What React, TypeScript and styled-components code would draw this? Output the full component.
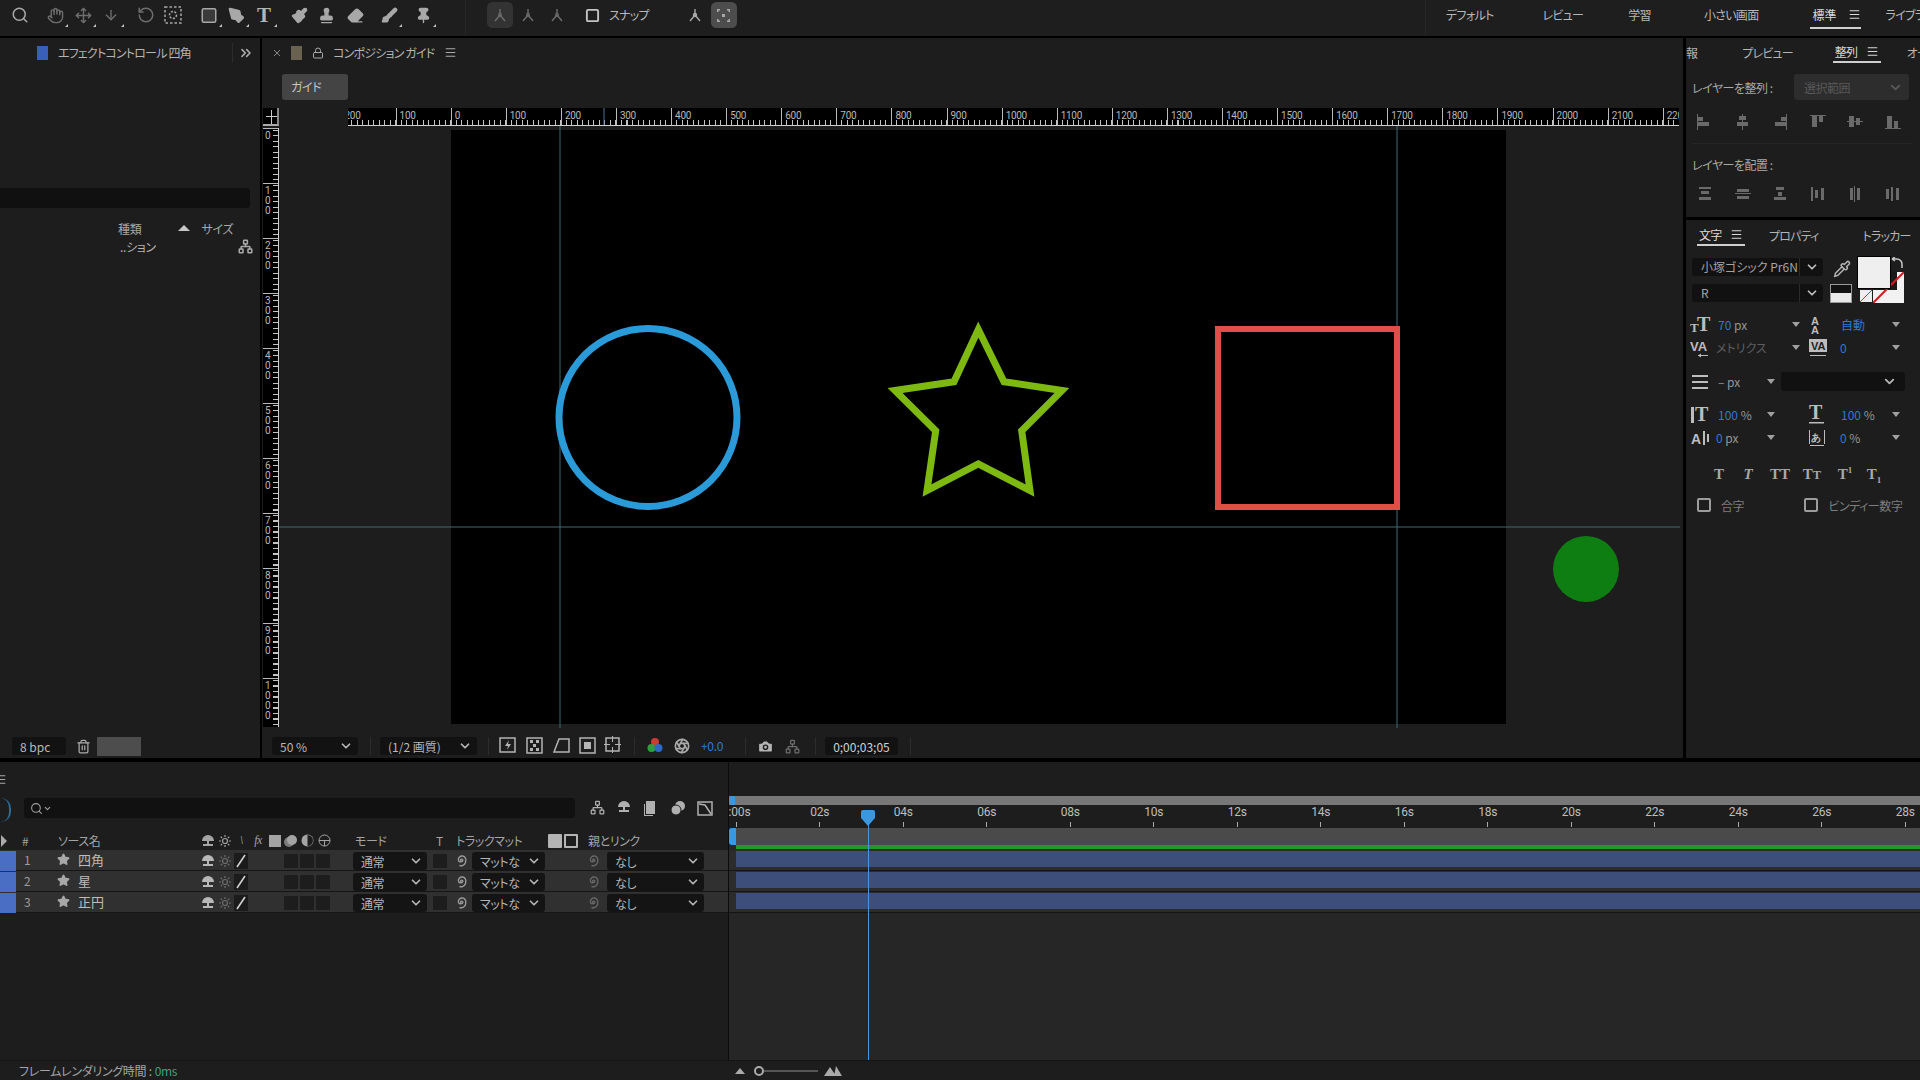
import React from "react";
import styled, { createGlobalStyle } from "styled-components";
import {
  Search,
  Hand,
  Move,
  ArrowDown,
  RotateCcw,
  Square,
  PenTool,
  Paintbrush,
  Stamp,
  Eraser,
  Brush,
  Pin,
  ChevronDown,
  ChevronsRight,
  Lock,
  Menu,
  Trash2,
  Camera,
  Star,
  Pipette,
  Aperture,
  Network,
} from "lucide-react";

const Global = createGlobalStyle`
  html, body {
    margin: 0;
    width: 1920px;
    height: 1080px;
    overflow: hidden;
    background: #000;
  }
  * { box-sizing: border-box; }
  body {
    font-family: "Noto Sans CJK JP", "Roboto", sans-serif;
    font-feature-settings: "palt";
    color: #b4b4b4;
  }
`;

const panel = "#1d1d1d";

const Shell = styled.div`
  width: 1920px;
  height: 1080px;
  display: flex;
  flex-direction: column;
  background: #000;
`;

/* top toolbar */
const Toolbar = styled.div`
  height: 36px;
  padding-bottom: 6px;
  background: #1e1e1e;
  display: flex;
  align-items: center;
  flex: none;
`;

const ToolCell = styled.div<{ $gap: number; $box?: string; $dim?: boolean; $corner?: boolean }>`
  position: relative;
  flex: none;
  width: 18px;
  height: 18px;
  margin-left: ${(p) => p.$gap}px;
  color: ${(p) => (p.$dim ? "#6e6e6e" : "#a8a8a8")};
  display: flex;
  align-items: center;
  justify-content: center;
  ${(p) => p.$box && `background: ${p.$box}; box-shadow: 0 0 0 4px ${p.$box}; border-radius: 2px;`}
  ${(p) =>
    p.$corner &&
    `&::after {
      content: "";
      position: absolute;
      right: -4px;
      bottom: -3px;
      border-left: 3px solid transparent;
      border-bottom: 3px solid #c4c4c4;
    }`}
`;

const SerifTool = styled(ToolCell)`
  font-family: "Liberation Serif", serif;
  font-weight: 700;
  font-size: 21px;
  color: #b4b4b4;
`;

const ToolSep = styled.div<{ $gap: number }>`
  width: 1px;
  height: 36px;
  align-self: flex-start;
  background: #262626;
  flex: none;
  margin-left: ${(p) => p.$gap}px;
`;

const TopText = styled.span<{ $gap: number }>`
  flex: none;
  font-size: 12px;
  letter-spacing: -0.7px;
  line-height: 26px;
  margin-left: ${(p) => p.$gap}px;
  color: #b8b8b8;
  white-space: nowrap;
`;

const ExposureText = styled(TopText)`
  color: #2f79d6;
  letter-spacing: -0.3px;
`;

const ActiveWorkspace = styled.div<{ $gap: number }>`
  flex: none;
  width: 51px;
  height: 28px;
  margin-left: ${(p) => p.$gap}px;
  padding-left: 2px;
  border-bottom: 2px solid #d0d0d0;
  display: flex;
  align-items: center;
  justify-content: space-between;
  font-size: 12px;
  color: #dcdcdc;
`;

/* main area */
const Main = styled.div`
  flex: none;
  height: 720px;
  margin-top: 2px;
  display: flex;
`;

const LeftPanel = styled.section`
  width: 260px;
  flex: none;
  background: ${panel};
  display: flex;
  flex-direction: column;
  margin-right: 2px;
`;

const TabRow = styled.div<{ $h?: number }>`
  height: ${(p) => p.$h ?? 34}px;
  padding-bottom: 5px;
  flex: none;
  display: flex;
  align-items: center;
  overflow: hidden;
  font-size: 12px;
  letter-spacing: -0.8px;
  color: #bcbcbc;
`;

const Footage = styled.span<{ $gap: number; $c: string }>`
  flex: none;
  width: 11px;
  height: 14px;
  margin-left: ${(p) => p.$gap}px;
  background: ${(p) => p.$c};
`;

const Tab = styled.span<{ $gap: number }>`
  flex: none;
  margin-left: ${(p) => p.$gap}px;
  white-space: nowrap;
  color: #b4b4b4;
`;

const ActiveTab = styled.div<{ $gap: number; $w: number }>`
  flex: none;
  width: ${(p) => p.$w}px;
  margin-left: ${(p) => p.$gap}px;
  padding: 0 2px;
  height: 20px;
  display: flex;
  align-items: center;
  justify-content: space-between;
  border-bottom: 2px solid #cfcfcf;
  color: #dadada;
`;

const TabIcon = styled.span<{ $gap: number }>`
  flex: none;
  display: flex;
  align-items: center;
  margin-left: ${(p) => p.$gap}px;
  color: #aaa;
`;

const VLine = styled.div<{ $gap: number; $h?: number }>`
  flex: none;
  width: 1px;
  height: ${(p) => p.$h ?? 20}px;
  background: #2c2c2c;
  margin-left: ${(p) => p.$gap}px;
`;

const ProjectSearch = styled.div`
  width: 250px;
  height: 20px;
  margin-top: 116px;
  background: #101010;
  border-radius: 0 3px 3px 0;
  flex: none;
`;

const ProjectHead = styled.div`
  height: 18px;
  margin-top: 11px;
  padding-left: 118px;
  display: flex;
  align-items: center;
  font-size: 12px;
  letter-spacing: -0.3px;
  color: #a8a8a8;
  flex: none;
`;

const SortArrow = styled.span`
  width: 0;
  height: 0;
  margin-left: 37px;
  margin-right: 11px;
  border-left: 6px solid transparent;
  border-right: 6px solid transparent;
  border-bottom: 6px solid #c8c8c8;
`;

const ProjectRow = styled.div`
  height: 20px;
  margin-top: -1px;
  padding-left: 120px;
  display: flex;
  align-items: center;
  font-size: 12px;
  letter-spacing: -0.3px;
  color: #b4b4b4;
  flex: none;
`;

const Spacer = styled.div`
  flex: 1;
`;

const BottomBar = styled.div`
  height: 24px;
  flex: none;
  display: flex;
  align-items: center;
  font-size: 12px;
`;

const DarkBox = styled.div<{ $gap: number; $w: number; $color?: string }>`
  flex: none;
  width: ${(p) => p.$w}px;
  height: 18px;
  margin-left: ${(p) => p.$gap}px;
  padding: 0 5px 0 8px;
  background: #121212;
  border-radius: 3px;
  display: flex;
  align-items: center;
  justify-content: space-between;
  font-size: 12px;
  white-space: nowrap;
  color: ${(p) => p.$color ?? "#b8b8b8"};
`;

const GrayPatch = styled.div`
  width: 44px;
  height: 19px;
  margin-left: 6px;
  background: #4d4d4d;
`;

/* composition panel */
const CompPanel = styled.section`
  width: 1421px;
  flex: none;
  background: ${panel};
  display: flex;
  flex-direction: column;
  margin-right: 3px;
`;

const GuideBar = styled.div`
  height: 36px;
  flex: none;
  padding: 2px 0 0 20px;
`;

const GuideButton = styled.div`
  width: 66px;
  height: 26px;
  border-radius: 3px;
  background: #444;
  color: #c6c6c6;
  font-size: 12px;
  letter-spacing: -0.5px;
  line-height: 26px;
  padding-left: 9px;
`;

const Viewer = styled.div`
  position: relative;
  flex: 1;
  display: flex;
  flex-direction: column;
  overflow: hidden;
`;

const RulerRow = styled.div`
  height: 18px;
  flex: none;
  display: flex;
`;

const RulerCorner = styled.div`
  flex: none;
  width: 16px;
  margin-left: 1px;
  background: #000;
  border-bottom: 2px solid #aaa;
  border-right: 2px solid #888;
  position: relative;
  &::before {
    content: "";
    position: absolute;
    left: 3px;
    right: 0;
    top: 8px;
    height: 1px;
    background: #ccc;
  }
  &::after {
    content: "";
    position: absolute;
    left: 8px;
    top: 2px;
    bottom: 0;
    width: 1px;
    background: #ccc;
  }
`;

const HRuler = styled.div`
  flex: 1;
  margin-left: 69px;
  margin-right: 4px;
  display: flex;
  overflow: hidden;
  background-color: #000;
  background-image: repeating-linear-gradient(
    to right,
    #c4c4c4 0,
    #c4c4c4 1px,
    transparent 1px,
    transparent 5.51px
  );
  background-size: 100% 5px;
  background-position: 3px 100%;
  background-repeat: no-repeat;
  border-bottom: 1px solid #d0d0d0;
`;

const HMajor = styled.div<{ $first?: boolean }>`
  flex: none;
  width: 55.1px;
  height: 18px;
  margin-left: ${(p) => (p.$first ? "-7.5px" : "0")};
  border-left: 1px solid #bbb;
  padding: 1px 0 0 3px;
  font-family: "Roboto", sans-serif;
  font-size: 10px;
  line-height: 14px;
  letter-spacing: -0.3px;
  color: #b8b8b8;
`;

const ViewerBody = styled.div`
  flex: 1;
  display: flex;
  min-height: 0;
`;

const VRuler = styled.div`
  flex: none;
  width: 16px;
  height: 599px;
  margin-left: 1px;
  margin-top: 2px;
  display: flex;
  flex-direction: column;
  overflow: hidden;
  background-color: #000;
  background-image: repeating-linear-gradient(
    to bottom,
    #c4c4c4 0,
    #c4c4c4 1px,
    transparent 1px,
    transparent 5.5px
  );
  background-size: 5px 100%;
  background-position: 100% 2px;
  background-repeat: no-repeat;
  border-right: 1px solid #d0d0d0;
`;

const VMajor = styled.div`
  flex: none;
  height: 55px;
  border-top: 1px solid #bbb;
  padding: 2px 0 0 2px;
  display: flex;
  flex-direction: column;
  font-family: "Roboto", sans-serif;
  font-size: 10px;
  line-height: 10px;
  color: #b8b8b8;
`;

const Canvas = styled.div`
  flex: none;
  width: 1055px;
  height: 594px;
  margin-left: 172px;
  margin-top: 4px;
  background: #000;
`;

const Overlay = styled.svg`
  position: absolute;
  left: 0;
  top: 0;
  pointer-events: none;
`;

/* right column */
const RightColumn = styled.aside`
  width: 234px;
  flex: none;
  display: flex;
  flex-direction: column;
  gap: 3px;
`;

const AlignPanel = styled.section`
  height: 179px;
  flex: none;
  background: ${panel};
  overflow: hidden;
`;

const LabelRow = styled.div<{ $top: number }>`
  height: 26px;
  margin-top: ${(p) => p.$top}px;
  padding: 0 11px 0 6px;
  display: flex;
  align-items: center;
  justify-content: space-between;
  font-size: 12px;
  letter-spacing: -0.5px;
  color: #a8a8a8;
`;

const DimSelect = styled.div`
  flex: none;
  width: 115px;
  height: 26px;
  padding: 0 6px 0 10px;
  background: #2d2d2d;
  border-radius: 3px;
  color: #585858;
  display: flex;
  align-items: center;
  justify-content: space-between;
`;

const AlignRow = styled.div<{ $top: number }>`
  margin-top: ${(p) => p.$top}px;
  height: 18px;
  padding-left: 10px;
  display: flex;
  gap: 19.6px;
  color: #6a6a6a;
`;

const Divider = styled.div<{ $top: number }>`
  height: 1px;
  margin: ${(p) => p.$top}px 8px 0 6px;
  background: #262626;
`;

const CharPanel = styled.section`
  flex: 1;
  background: ${panel};
  overflow: hidden;
`;

const FontArea = styled.div`
  position: relative;
  height: 46px;
  margin-top: 2px;
  display: flex;
`;

const FontColumn = styled.div`
  width: 131px;
  margin-left: 6px;
  display: flex;
  flex-direction: column;
  gap: 8px;
`;

const FontSelect = styled.div`
  height: 18px;
  display: flex;
  background: #111;
  border-radius: 3px;
  font-size: 12px;
  color: #a4a4a4;
`;

const FontName = styled.div`
  width: 108px;
  padding-left: 9px;
  line-height: 18px;
  white-space: nowrap;
  overflow: hidden;
  border-right: 1px solid #2b2b2b;
`;

const FontArrow = styled.div`
  flex: 1;
  display: flex;
  align-items: center;
  justify-content: center;
  color: #c0c0c0;
`;

const Swatches = styled.div`
  position: relative;
  width: 90px;
  margin-left: 7px;
`;

const Eyedrop = styled.div`
  position: absolute;
  left: 3px;
  top: 1px;
  color: #b4b4b4;
`;

const BwChip = styled.div`
  position: absolute;
  left: 0;
  top: 26px;
  width: 22px;
  height: 19px;
  border: 1px solid #999;
  background: linear-gradient(#111 0 50%, #e8e8e8 50%);
`;

const FrontSwatch = styled.div`
  position: absolute;
  left: 28px;
  top: -1px;
  width: 32px;
  height: 31px;
  background: #efefef;
  box-shadow: 0 0 0 1px #000;
  z-index: 2;
`;

const BackSwatch = styled.div`
  position: absolute;
  left: 43px;
  top: 14px;
  width: 31px;
  height: 31px;
  background: #f2f2f2;
  display: flex;
  align-items: center;
  justify-content: center;
`;

const SmallSwatch = styled.div`
  position: absolute;
  left: 30px;
  top: 32px;
  width: 12px;
  height: 12px;
  background: linear-gradient(135deg, #eee 47%, #c33 47% 53%, #eee 53%);
`;

const SwapMark = styled.svg`
  position: absolute;
  left: 61px;
  top: -1px;
`;

const PropRows = styled.div`
  padding: 9px 20px 0 4px;
`;

const PropRow = styled.div<{ $top?: number }>`
  height: 23px;
  margin-top: ${(p) => p.$top ?? 0}px;
  display: flex;
  align-items: center;
  justify-content: space-between;
`;

const PropCell = styled.div<{ $w: number }>`
  flex: none;
  width: ${(p) => p.$w}px;
  display: flex;
  align-items: center;
  font-size: 12px;
`;

const PropIcon = styled.svg`
  flex: none;
  color: #bdbdbd;
  fill: currentColor;
`;

const PropValue = styled.span<{ $gap: number; $dim?: boolean }>`
  margin-left: ${(p) => p.$gap}px;
  white-space: nowrap;
  color: ${(p) => (p.$dim ? "#5e5e5e" : "#959595")};
`;

const Blue = styled.span`
  color: #2f79d6;
`;

const Elapsed = styled.span`
  color: #3fa07a;
  margin-left: 3px;
`;

const TriDown = styled.span`
  margin-left: auto;
  width: 0;
  height: 0;
  border-left: 4px solid transparent;
  border-right: 4px solid transparent;
  border-top: 5px solid #a0a0a0;
`;

const LeadSelect = styled.div`
  flex: none;
  width: 124px;
  height: 19px;
  margin-right: -5px;
  padding-right: 8px;
  background: #111;
  border-radius: 3px;
  display: flex;
  align-items: center;
  justify-content: flex-end;
  color: #b4b4b4;
`;

const StyleRow = styled.div`
  margin: 13px 0 0 25px;
  height: 24px;
  display: flex;
  align-items: center;
  font-family: "Liberation Serif", serif;
  font-weight: 700;
  font-size: 15px;
  color: #a8a8a8;
`;

const StyleBtn = styled.span<{ $w: number; $gap?: number; $italic?: boolean }>`
  width: ${(p) => p.$w}px;
  margin-left: ${(p) => p.$gap ?? 0}px;
  text-align: center;
  white-space: nowrap;
  ${(p) => p.$italic && "font-style: italic;"}
  sup, sub { font-size: 9px; line-height: 0; }
`;

const CheckRow = styled.div`
  margin: 8px 0 0 7px;
  height: 22px;
  display: flex;
  align-items: center;
  font-size: 12px;
  letter-spacing: -0.4px;
  color: #7e7e7e;
`;

const CheckBox = styled.span<{ $gap?: number }>`
  width: 14px;
  height: 14px;
  margin-left: ${(p) => p.$gap ?? 0}px;
  margin-right: 10px;
  border: 2px solid #9c9c9c;
  border-radius: 2px;
`;

/* timeline */
const Timeline = styled.section`
  flex: none;
  height: 318px;
  margin-top: 4px;
  background: ${panel};
  display: flex;
  flex-direction: column;
`;

const TimelineBody = styled.div`
  height: 298px;
  flex: none;
  display: flex;
`;

const LayerPane = styled.div`
  width: 728px;
  flex: none;
  display: flex;
  flex-direction: column;
`;

const TimelineTabs = styled.div`
  height: 34px;
  flex: none;
  display: flex;
  align-items: center;
  color: #aaa;
  overflow: hidden;
`;

const SearchRow = styled.div`
  height: 36px;
  flex: none;
  display: flex;
  align-items: flex-start;
  padding-top: 2px;
`;

const GaugeMark = styled.div`
  flex: none;
  width: 11px;
  height: 24px;
  border-right: 2px solid #2d6a94;
  border-radius: 0 10px 10px 0;
`;

const LayerSearch = styled.div`
  flex: none;
  width: 551px;
  height: 20px;
  margin-left: 13px;
  padding-left: 6px;
  background: #111;
  border-radius: 3px;
  display: flex;
  align-items: center;
  color: #a0a0a0;
`;

const TlIcons = styled.div`
  display: flex;
  gap: 11.5px;
  margin: 2px 0 0 15px;
  color: #b0b0b0;
`;

const columns = "16px 42px 142px 152px 78px 25px 125px 148px";

const HeadRow = styled.div`
  height: 18px;
  padding-bottom: 3px;
  flex: none;
  display: grid;
  grid-template-columns: ${columns};
  align-items: center;
  font-size: 12px;
  letter-spacing: -0.4px;
  color: #a4a4a4;
  white-space: nowrap;
`;

const HeadCell = styled.div<{ $pad?: number }>`
  display: flex;
  align-items: center;
  padding-left: ${(p) => p.$pad ?? 0}px;
`;

const SwitchHead = styled.div`
  display: flex;
  align-items: center;
  color: #a4a4a4;
`;

const SwitchSlot = styled.span`
  flex: none;
  width: 16.6px;
  height: 16px;
  display: flex;
  align-items: center;
  justify-content: center;
  font-size: 12px;
  font-style: italic;
  font-family: "Liberation Serif", serif;
`;

const LayerRow = styled.div`
  height: 21px;
  flex: none;
  display: grid;
  grid-template-columns: ${columns};
  align-items: center;
  background: #303030;
  border-bottom: 1px solid #151515;
  font-size: 12px;
`;

const LabelChip = styled.div`
  height: 20px;
  background: #4a6ec4;
`;

const LayerNo = styled.div`
  padding: 0 0 3px 8px;
  color: #9c9c9c;
`;

const LayerName = styled.div`
  display: flex;
  align-items: center;
  gap: 8px;
  padding-bottom: 3px;
  font-size: 13px;
  color: #bcbcbc;
`;

const SwitchGroup = styled.div`
  display: flex;
  align-items: center;
  color: #b8b8b8;
`;

const MiniBox = styled.span<{ $gap?: number; $tone?: string; $outline?: boolean }>`
  flex: none;
  width: 14px;
  height: 14px;
  margin-left: ${(p) => p.$gap ?? 2}px;
  background: ${(p) => p.$tone ?? "#1d1d1d"};
  border-radius: 1px;
  ${(p) => p.$outline && "background: none; border: 2px solid #b4b4b4;"}
`;

const MiniSelect = styled.div<{ $w: number; $gap?: number }>`
  flex: none;
  width: ${(p) => p.$w}px;
  height: 18px;
  margin-left: ${(p) => p.$gap ?? 0}px;
  padding: 0 4px 0 8px;
  background: #141414;
  border-radius: 3px;
  display: flex;
  align-items: center;
  justify-content: space-between;
  color: #b4b4b4;
  font-size: 12px;
  letter-spacing: -0.4px;
  white-space: nowrap;
`;

const SelectCell = styled.div<{ $pad?: number }>`
  display: flex;
  align-items: center;
  padding-left: ${(p) => p.$pad ?? 0}px;
  color: #8c8c8c;
`;

const TrackPane = styled.div`
  position: relative;
  flex: 1;
  min-width: 0;
  display: flex;
  flex-direction: column;
  background: #262626;
  overflow: hidden;
  border-left: 1px solid #0c0c0c;
`;

const NavArea = styled.div`
  height: 34px;
  flex: none;
  background: ${panel};
`;

const NavBar = styled.div`
  position: relative;
  height: 9px;
  flex: none;
  background: #777;
`;

const Handle = styled.span<{ $h: number }>`
  position: absolute;
  left: 0;
  top: 0;
  width: 6px;
  height: ${(p) => p.$h}px;
  background: #3d97dc;
  border-radius: 3px 0 0 3px;
`;

const TimeRuler = styled.div`
  height: 23px;
  flex: none;
  background: ${panel};
  display: flex;
  overflow: hidden;
`;

const TimeMark = styled.div<{ $first?: boolean }>`
  flex: none;
  width: 83.5px;
  margin-left: ${(p) => (p.$first ? "-34.5px" : "0")};
  display: flex;
  flex-direction: column;
  align-items: center;
  font-family: "Roboto", sans-serif;
  font-size: 12px;
  line-height: 15px;
  letter-spacing: -0.2px;
  color: #bdbdbd;
  &::after {
    content: "";
    width: 1px;
    height: 5px;
    margin-top: 2px;
    background: #aaa;
  }
`;

const AreaBar = styled.div`
  position: relative;
  height: 17px;
  flex: none;
  background: #4a4a4a;
  margin-left: 7px;
`;

const AreaHandle = styled(Handle)`
  left: -7px;
  width: 7px;
`;

const GreenLine = styled.div`
  height: 5px;
  flex: none;
  margin-left: 7px;
  background: #1c9a2e;
  border-bottom: 1px solid #10381a;
`;

const TrackRow = styled.div`
  height: 21px;
  flex: none;
  padding: 1px 0 3px 7px;
  background: #2c2c2c;
  border-bottom: 1px solid #151515;
`;

const TrackBar = styled.div`
  height: 100%;
  background: #3e4e7a;
`;

const Playhead = styled.svg`
  position: absolute;
  left: 132px;
  top: 48px;
`;

const PlayLine = styled.div`
  position: absolute;
  left: 139px;
  top: 62px;
  bottom: 0;
  width: 1px;
  background: #4b93dc;
`;

const StatusBar = styled.div`
  height: 20px;
  flex: none;
  display: flex;
  align-items: center;
  padding-left: 19px;
  font-size: 12px;
  letter-spacing: -0.3px;
  color: #a4a4a4;
  border-top: 1px solid #141414;
`;

const StatusZoom = styled.div`
  margin-left: 558px;
  display: flex;
  align-items: center;
`;

const ZoomKnob = styled.span`
  width: 10px;
  height: 10px;
  margin-left: 9px;
  border: 2px solid #aaa;
  border-radius: 50%;
`;

const ZoomTrack = styled.span`
  width: 54px;
  height: 2px;
  background: #555;
`;

const ZoomBig = styled.svg`
  margin-left: 6px;
`;

const HamburgerStub = styled(Menu)`
  margin-left: -6px;
`;

const LayerStar = styled(Star)`
  margin-left: -1px;
`;

function SnapIcon({ dim }: { dim?: boolean }) {
  return (
    <svg width="18" height="18" viewBox="0 0 18 18" fill="none" stroke="currentColor" strokeWidth="1.4">
      <path d="M9 8v-5M9 9l-5 6M9 9l5 6" />
      <circle cx="9" cy="9" r="1.5" fill="currentColor" opacity={dim ? 0.7 : 1} />
    </svg>
  );
}

function AnchorIcon() {
  return (
    <svg width="18" height="18" viewBox="0 0 18 18" fill="none" stroke="currentColor" strokeWidth="1.5">
      <path d="M1 1h16v16H1z" strokeDasharray="2.5 2" />
      <circle cx="9" cy="9" r="3.5" strokeDasharray="2 1.5" />
    </svg>
  );
}

function GridSnapIcon() {
  return (
    <svg width="15" height="15" viewBox="0 0 15 15" fill="currentColor">
      <path d="M1 1h3v1.500H2.500V4H1zM11 1h3v3h-1.500V2.500H11zM1 11h1.500v1.500H4V14H1zM12.500 11H14v3h-3v-1.500h1.500zM6 6h3v3H6z" />
    </svg>
  );
}

function ShyIcon() {
  return (
    <svg width="14" height="14" viewBox="0 0 14 14" fill="currentColor">
      <path d="M1 7a6 6 0 0 1 12 0z" />
      <rect x="6" y="7" width="2" height="4" />
      <rect x="2" y="10" width="10" height="2" />
    </svg>
  );
}

function SunIcon({ dim }: { dim?: boolean }) {
  return (
    <svg width="12" height="12" viewBox="0 0 12 12" fill="none" stroke="currentColor" strokeWidth="1.2" opacity={dim ? 0.45 : 1}>
      <circle cx="6" cy="6" r="2.5" />
      <path d="M6 0v2M6 10v2M0 6h2M10 6h2M1.700 1.700l1.400 1.400M8.900 8.900l1.400 1.400M1.700 10.300l1.400-1.400M8.900 3.100l1.400-1.400" />
    </svg>
  );
}

function SlashBox() {
  return (
    <svg width="14" height="16" viewBox="0 0 14 16">
      <rect width="14" height="16" fill="#1b1b1b" />
      <path d="M3 14 11 2" stroke="#d0d0d0" strokeWidth="1.6" />
    </svg>
  );
}

function Spiral({ color = "#9a9a9a" }: { color?: string }) {
  return (
    <svg width="13" height="14" viewBox="0 0 13 14" fill="none" stroke={color} strokeWidth="1.4">
      <path d="M6.500 7.500a1.200 1.200 0 1 1 1.400-1.400c0 2-3.600 2.600-4.400.4C2.700 4 5 1.700 7.500 2c3 .3 4 3.500 3 6.500-.9 2.700-4 3.700-6 3" />
    </svg>
  );
}

function FootIcon({ kind }: { kind: number }) {
  return (
    <svg width="18" height="20" viewBox="0 0 18 20" fill="none" stroke="#b4b4b4" strokeWidth="1.5">
      {kind === 0 && (
        <>
          <rect x="1" y="2" width="15" height="14" />
          <path d="M10 4 6 10h3l-1 4 4-6H9z" fill="#b4b4b4" stroke="none" />
        </>
      )}
      {kind === 1 && (
        <>
          <rect x="1" y="2" width="15" height="15" />
          <path d="M4 4h3v3H4zM10 4h3v3h-3zM7 8h3v3H7zM4 12h3v3H4zM10 12h3v3h-3z" fill="#b4b4b4" stroke="none" />
        </>
      )}
      {kind === 2 && <path d="M6 3h10v13H1z" />}
      {kind === 3 && (
        <>
          <rect x="1" y="2" width="15" height="15" />
          <rect x="5" y="6" width="7" height="7" fill="#b4b4b4" stroke="none" />
        </>
      )}
      {kind === 4 && (
        <>
          <rect x="2" y="2" width="13" height="13" />
          <path d="M8.500 0v6M8.500 11v6M0 8.500h6M11 8.500h6" strokeWidth="1" />
        </>
      )}
    </svg>
  );
}

function ColorWheel() {
  return (
    <svg width="16" height="18" viewBox="0 0 16 18">
      <circle cx="8" cy="5" r="4" fill="#d03a32" />
      <circle cx="4.500" cy="11" r="4" fill="#2f9c3f" />
      <circle cx="11.500" cy="11" r="4" fill="#2f68c4" />
    </svg>
  );
}

function AlignIcon({ kind }: { kind: number }) {
  const rects = [
    // top row: left, h centre, right, top, v centre, bottom
    ["M1 1h1v16H1z", "M2 4h5v4H2z", "M2 9h11v4H2z"],
    ["M8 1h1v16H8z", "M5 3h7v4H5z", "M3 9h11v4H3z"],
    ["M15 1h1v16h-1z", "M10 4h5v4h-5z", "M4 9h11v4H4z"],
    ["M1 2h16v1H1z", "M3 3h5v11H3z", "M10 3h4v6h-4z"],
    ["M1 8h16v1H1z", "M3 3h5v11H3z", "M10 5h4v7h-4z"],
    ["M1 15h16v1H1z", "M3 3h5v12H3z", "M10 8h4v7h-4z"],
    // bottom row: distribute
    ["M3 2h12v2H3z", "M5 6h8v3H5z", "M3 12h12v3H3z"],
    ["M3 4h12v3H3z", "M1 8h16v1H1z", "M3 11h12v3H3z"],
    ["M5 2h8v3H5z", "M7 7h4v4H7z", "M3 12h12v3H3z"],
    ["M2 2h2v14H2z", "M6 5h3v8H6z", "M12 3h3v12h-3z"],
    ["M4 3h3v12H4z", "M8 1h1v16H8z", "M11 3h3v12h-3z"],
    ["M2 4h3v10H2z", "M7 2h2v14H7z", "M12 3h3v12h-3z"],
  ][kind];
  return (
    <svg width="18" height="18" viewBox="0 0 18 18" fill="currentColor">
      {rects.map((d) => (
        <path key={d} d={d} />
      ))}
    </svg>
  );
}

function TextIcon({ children, w = 22 }: { children: React.ReactNode; w?: number }) {
  return (
    <PropIcon width={w} height="20" viewBox={`0 0 ${w} 20`}>
      {children}
    </PropIcon>
  );
}

const serif = { fontFamily: "Liberation Serif, serif", fontWeight: 700 };
const sans = { fontFamily: "Liberation Sans, sans-serif", fontWeight: 700 };

const hMarks = [
  200, 100, 0, 100, 200, 300, 400, 500, 600, 700, 800, 900, 1000, 1100, 1200, 1300, 1400, 1500, 1600, 1700, 1800, 1900, 2000,
  2100, 2200,
];
const vMarks = ["0", "100", "200", "300", "400", "500", "600", "700", "800", "900", "1000"];
const times = Array.from({ length: 15 }, (_, i) => (i === 0 ? "0:00s" : `${String(i * 2).padStart(2, "0")}s`));
const layers = [
  { no: 1, name: "四角" },
  { no: 2, name: "星" },
  { no: 3, name: "正円" },
];

export default function App() {
  return (
    <Shell>
      <Global />
      <Toolbar>
        <ToolCell $gap={11}><Search size={18} /></ToolCell>
        <ToolCell $gap={17} $corner $dim><Hand size={17} /></ToolCell>
        <ToolCell $gap={10} $corner $dim><Move size={17} /></ToolCell>
        <ToolCell $gap={10} $corner $dim><ArrowDown size={16} /></ToolCell>
        <ToolCell $gap={17} $dim><RotateCcw size={18} /></ToolCell>
        <ToolCell $gap={9}><AnchorIcon /></ToolCell>
        <ToolCell $gap={18} $corner><Square size={19} fill="#3a3a3a" /></ToolCell>
        <ToolCell $gap={9} $corner><PenTool size={17} fill="#a8a8a8" color="#a8a8a8" /></ToolCell>
        <SerifTool $gap={10} $corner>T</SerifTool>
        <ToolCell $gap={17}><Paintbrush size={17} fill="#a8a8a8" /></ToolCell>
        <ToolCell $gap={9}><Stamp size={17} fill="#a8a8a8" /></ToolCell>
        <ToolCell $gap={11}><Eraser size={17} fill="#a8a8a8" /></ToolCell>
        <ToolCell $gap={16} $corner><Brush size={17} fill="#a8a8a8" /></ToolCell>
        <ToolCell $gap={16} $corner><Pin size={17} fill="#a8a8a8" /></ToolCell>
        <ToolSep $gap={33} />
        <ToolCell $gap={25} $box="#333" $dim><SnapIcon dim /></ToolCell>
        <ToolCell $gap={10} $dim><SnapIcon dim /></ToolCell>
        <ToolCell $gap={11} $dim><SnapIcon dim /></ToolCell>
        <ToolCell $gap={17}><Square size={15} strokeWidth={3} color="#c4c4c4" /></ToolCell>
        <TopText $gap={8}>スナップ</TopText>
        <ToolCell $gap={37}><SnapIcon /></ToolCell>
        <ToolCell $gap={11} $box="#4d4d4d"><GridSnapIcon /></ToolCell>
        <ToolSep $gap={692} />
        <TopText $gap={20}>デフォルト</TopText>
        <TopText $gap={49}>レビュー</TopText>
        <TopText $gap={45}>学習</TopText>
        <TopText $gap={53}>小さい画面</TopText>
        <ActiveWorkspace $gap={52}>標準<Menu size={13} /></ActiveWorkspace>
        <TopText $gap={24}>ライブラリ</TopText>
      </Toolbar>

      <Main>
        <LeftPanel>
          <TabRow>
            <Footage $gap={37} $c="#3a5fb8" />
            <Tab $gap={10}>エフェクトコントロール 四角</Tab>
            <VLine $gap={41} />
            <TabIcon $gap={5}><ChevronsRight size={16} strokeWidth={2.5} /></TabIcon>
          </TabRow>
          <ProjectSearch />
          <ProjectHead>
            種類
            <SortArrow />
            サイズ
          </ProjectHead>
          <ProjectRow>
            ..ション
            <TabIcon $gap={82}><Network size={15} strokeWidth={2.5} /></TabIcon>
          </ProjectRow>
          <Spacer />
          <BottomBar>
            <DarkBox $gap={12} $w={54}>8 bpc</DarkBox>
            <TabIcon $gap={10}><Trash2 size={15} /></TabIcon>
            <GrayPatch />
          </BottomBar>
        </LeftPanel>

        <CompPanel>
          <TabRow>
            <TabIcon $gap={12}><svg width="6" height="6" viewBox="0 0 6 6" stroke="#888"><path d="M0 0l6 6M6 0L0 6" /></svg></TabIcon>
            <Footage $gap={11} $c="#6a6250" />
            <TabIcon $gap={10}><Lock size={12} /></TabIcon>
            <Tab $gap={9}>コンポジション ガイド</Tab>
            <TabIcon $gap={10}><Menu size={13} /></TabIcon>
          </TabRow>
          <GuideBar>
            <GuideButton>ガイド</GuideButton>
          </GuideBar>
          <Viewer>
            <RulerRow>
              <RulerCorner />
              <HRuler>
                {hMarks.map((m, i) => (
                  <HMajor key={i} $first={i === 0}>{m}</HMajor>
                ))}
              </HRuler>
            </RulerRow>
            <ViewerBody>
              <VRuler>
                {vMarks.map((m) => (
                  <VMajor key={m}>
                    {m.split("").map((d, i) => (
                      <span key={i}>{d}</span>
                    ))}
                  </VMajor>
                ))}
              </VRuler>
              <Canvas />
            </ViewerBody>
            <Overlay width="1421" height="626" viewBox="262 108 1421 626">
              <line x1="604" y1="108" x2="604" y2="125" stroke="#50709c" />
              <line x1="560" y1="126" x2="560" y2="728" stroke="#3f6a72" />
              <line x1="1397" y1="126" x2="1397" y2="728" stroke="#3f6a72" />
              <line x1="279" y1="527" x2="1680" y2="527" stroke="#3f6a72" />
              <circle cx="648" cy="417.500" r="89" fill="none" stroke="#2b9ad9" strokeWidth="7" />
              <polygon
                points="978.300,329.500 1004,381.700 1062,390.500 1021.700,430.700 1030,490.500 978.300,464 927,490.500 935.700,430.700 895,390.500 954,381.700"
                fill="none"
                stroke="#7eb911"
                strokeWidth="7"
              />
              <rect x="1218" y="329" width="179" height="178" fill="none" stroke="#e14d49" strokeWidth="6" />
              <circle cx="1586" cy="569" r="33" fill="#0e7d12" />
            </Overlay>
          </Viewer>
          <BottomBar>
            <DarkBox $gap={10} $w={86}>50 %<ChevronDown size={14} strokeWidth={3} /></DarkBox>
            <VLine $gap={12} $h={18} />
            <DarkBox $gap={9} $w={97}>(1/2 画質)<ChevronDown size={14} strokeWidth={3} /></DarkBox>
            <VLine $gap={11} $h={18} />
            <ToolCell $gap={10}><FootIcon kind={0} /></ToolCell>
            <ToolCell $gap={9}><FootIcon kind={1} /></ToolCell>
            <ToolCell $gap={9}><FootIcon kind={2} /></ToolCell>
            <ToolCell $gap={8}><FootIcon kind={3} /></ToolCell>
            <ToolCell $gap={7}><FootIcon kind={4} /></ToolCell>
            <VLine $gap={12} $h={18} />
            <ToolCell $gap={11}><ColorWheel /></ToolCell>
            <ToolCell $gap={9}><Aperture size={16} strokeWidth={2.5} /></ToolCell>
            <ExposureText $gap={10}>+0.0</ExposureText>
            <VLine $gap={22} $h={18} />
            <ToolCell $gap={10}><Camera size={17} fill="#b4b4b4" color="#1d1d1d" /></ToolCell>
            <ToolCell $gap={9} $dim><Network size={15} /></ToolCell>
            <VLine $gap={14} $h={18} />
            <DarkBox $gap={9} $w={73} $color="#d0d0d0">0;00;03;05</DarkBox>
            <VLine $gap={12} $h={18} />
          </BottomBar>
        </CompPanel>

        <RightColumn>
          <AlignPanel>
            <TabRow>
              <Tab $gap={0}>報</Tab>
              <Tab $gap={45}>プレビュー</Tab>
              <ActiveTab $gap={40} $w={48}><span>整列</span><Menu size={13} /></ActiveTab>
              <Tab $gap={26}>オーディオ</Tab>
            </TabRow>
            <LabelRow $top={2}>
              <span>レイヤーを整列 :</span>
              <DimSelect>選択範囲<ChevronDown size={15} strokeWidth={3} /></DimSelect>
            </LabelRow>
            <AlignRow $top={13}>
              {[0, 1, 2, 3, 4, 5].map((k) => (
                <AlignIcon key={k} kind={k} />
              ))}
            </AlignRow>
            <Divider $top={12} />
            <LabelRow $top={7}>
              <span>レイヤーを配置 :</span>
            </LabelRow>
            <AlignRow $top={8}>
              {[6, 7, 8, 9, 10, 11].map((k) => (
                <AlignIcon key={k} kind={k} />
              ))}
            </AlignRow>
          </AlignPanel>

          <CharPanel>
            <TabRow $h={36}>
              <ActiveTab $gap={11} $w={48}><span>文字</span><Menu size={13} /></ActiveTab>
              <Tab $gap={24}>プロパティ</Tab>
              <Tab $gap={44}>トラッカー</Tab>
            </TabRow>
            <FontArea>
              <FontColumn>
                <FontSelect>
                  <FontName>小塚ゴシック Pr6N</FontName>
                  <FontArrow><ChevronDown size={14} strokeWidth={3} /></FontArrow>
                </FontSelect>
                <FontSelect>
                  <FontName>R</FontName>
                  <FontArrow><ChevronDown size={14} strokeWidth={3} /></FontArrow>
                </FontSelect>
              </FontColumn>
              <Swatches>
                <Eyedrop><Pipette size={18} /></Eyedrop>
                <BwChip />
                <FrontSwatch />
                <BackSwatch>
                  <svg width="31" height="31" viewBox="0 0 31 31">
                    <rect x="0" y="0" width="31" height="31" fill="#f2f2f2" />
                    <rect x="0" y="0" width="24" height="18" fill="#1a1a1a" />
                    <path d="M31 0 0 31" stroke="#c9201e" strokeWidth="2" />
                  </svg>
                </BackSwatch>
                <SmallSwatch />
                <SwapMark width="13" height="13" viewBox="0 0 13 13" fill="none" stroke="#c8c8c8" strokeWidth="1.5">
                  <path d="M1 2h5a5 5 0 0 1 5 5v4M1 2l3-2M1 2l3 2" />
                </SwapMark>
              </Swatches>
            </FontArea>
            <PropRows>
              <PropRow>
                <PropCell $w={110}>
                  <TextIcon>
                    <text x="0" y="17" fontSize="13" style={serif}>T</text>
                    <text x="7" y="16" fontSize="20" style={serif}>T</text>
                  </TextIcon>
                  <PropValue $gap={6}><Blue>70</Blue> px</PropValue>
                  <TriDown />
                </PropCell>
                <PropCell $w={92}>
                  <TextIcon w={18}>
                    <text x="3" y="10" fontSize="11" style={sans}>A</text>
                    <text x="3" y="19" fontSize="11" style={sans}>A</text>
                  </TextIcon>
                  <PropValue $gap={15}><Blue>自動</Blue></PropValue>
                  <TriDown />
                </PropCell>
              </PropRow>
              <PropRow>
                <PropCell $w={110}>
                  <TextIcon>
                    <text x="0" y="13" fontSize="13" style={sans}>VA</text>
                    <path d="M8 17h10v1H8zM8 17.500l3-2v4z" />
                  </TextIcon>
                  <PropValue $gap={4} $dim>メトリクス</PropValue>
                  <TriDown />
                </PropCell>
                <PropCell $w={92}>
                  <TextIcon w={20}>
                    <rect x="1" y="1" width="18" height="13" />
                    <text x="3" y="12" fontSize="11" fill="#1d1d1d" style={sans}>VA</text>
                    <path d="M2 17h16v1H2z" />
                  </TextIcon>
                  <PropValue $gap={12}><Blue>0</Blue></PropValue>
                  <TriDown />
                </PropCell>
              </PropRow>
              <PropRow $top={11}>
                <PropCell $w={85}>
                  <TextIcon>
                    <path d="M2 3h16v2H2zM2 9h16v2H2zM2 15h16v2H2z" />
                  </TextIcon>
                  <PropValue $gap={6}>– px</PropValue>
                  <TriDown />
                </PropCell>
                <LeadSelect><ChevronDown size={15} strokeWidth={3} /></LeadSelect>
              </PropRow>
              <PropRow $top={10}>
                <PropCell $w={85}>
                  <TextIcon>
                    <text x="5" y="16" fontSize="20" style={serif}>T</text>
                    <path d="M1 2h3v16H1z" />
                  </TextIcon>
                  <PropValue $gap={6}><Blue>100</Blue> %</PropValue>
                  <TriDown />
                </PropCell>
                <PropCell $w={92}>
                  <TextIcon w={18}>
                    <text x="1" y="14" fontSize="20" style={serif}>T</text>
                    <path d="M1 17h15v1.500H1z" />
                  </TextIcon>
                  <PropValue $gap={15}><Blue>100</Blue> %</PropValue>
                  <TriDown />
                </PropCell>
              </PropRow>
              <PropRow>
                <PropCell $w={85}>
                  <TextIcon>
                    <text x="1" y="16" fontSize="14" style={sans}>A</text>
                    <path d="M13 3h2v14h-2zM17 6h2v8h-2z" />
                  </TextIcon>
                  <PropValue $gap={4}><Blue>0</Blue> px</PropValue>
                  <TriDown />
                </PropCell>
                <PropCell $w={92}>
                  <TextIcon w={18}>
                    <text x="3" y="13" fontSize="10" style={sans}>あ</text>
                    <path d="M1 2h1v14H1zM16 2h1v14h-1zM2 17h14v1H2z" />
                  </TextIcon>
                  <PropValue $gap={14}><Blue>0</Blue> %</PropValue>
                  <TriDown />
                </PropCell>
              </PropRow>
            </PropRows>
            <StyleRow>
              <StyleBtn $w={16}>T</StyleBtn>
              <StyleBtn $w={16} $gap={13} $italic>T</StyleBtn>
              <StyleBtn $w={24} $gap={12}>TT</StyleBtn>
              <StyleBtn $w={24} $gap={8}>T<small>T</small></StyleBtn>
              <StyleBtn $w={22} $gap={10}>T<sup>1</sup></StyleBtn>
              <StyleBtn $w={18} $gap={9}>T<sub>1</sub></StyleBtn>
            </StyleRow>
            <CheckRow>
              <CheckBox $gap={4} />
              合字
              <CheckBox $gap={60} />
              ビンディー数字
            </CheckRow>
          </CharPanel>
        </RightColumn>
      </Main>

      <Timeline>
        <TimelineBody>
          <LayerPane>
            <TimelineTabs><HamburgerStub size={13} /></TimelineTabs>
            <SearchRow>
              <GaugeMark />
              <LayerSearch><Search size={13} /><ChevronDown size={9} strokeWidth={3} /></LayerSearch>
              <TlIcons>
                <Network size={15} strokeWidth={2} />
                <ShyIcon />
                <svg width="16" height="16" viewBox="0 0 16 16" fill="currentColor"><path d="M4 1h9v13H4zM2 4h1v11h8v1H2z" /></svg>
                <svg width="16" height="16" viewBox="0 0 16 16" fill="currentColor"><circle cx="10" cy="6" r="5" /><circle cx="6" cy="10" r="5" stroke="#1d1d1d" /></svg>
                <svg width="16" height="16" viewBox="0 0 16 16" fill="none" stroke="currentColor" strokeWidth="1.5"><rect x="1" y="2" width="14" height="13" /><path d="M2 4l6 1 6 9" /></svg>
              </TlIcons>
            </SearchRow>
            <HeadRow>
              <HeadCell><svg width="10" height="12" viewBox="0 0 10 12" fill="#aaa"><path d="M1 0l6 6-6 6z" /></svg></HeadCell>
              <HeadCell $pad={6}>#</HeadCell>
              <HeadCell>ソース名</HeadCell>
              <SwitchHead>
                <SwitchSlot><ShyIcon /></SwitchSlot>
                <SwitchSlot><SunIcon /></SwitchSlot>
                <SwitchSlot>\</SwitchSlot>
                <SwitchSlot>fx</SwitchSlot>
                <SwitchSlot><svg width="14" height="14" viewBox="0 0 14 14" fill="currentColor"><path d="M1 1h12v12H1z" /></svg></SwitchSlot>
                <SwitchSlot><svg width="14" height="14" viewBox="0 0 14 14" fill="currentColor"><circle cx="8" cy="6" r="5" /><circle cx="5" cy="8" r="5" opacity=".7" /></svg></SwitchSlot>
                <SwitchSlot><svg width="13" height="13" viewBox="0 0 13 13"><circle cx="6.500" cy="6.500" r="6" fill="currentColor" /><path d="M6.500 1a5.500 5.500 0 0 1 0 11z" fill="#1d1d1d" /></svg></SwitchSlot>
                <SwitchSlot><svg width="13" height="13" viewBox="0 0 13 13" fill="none" stroke="currentColor"><circle cx="6.500" cy="6.500" r="5.500" /><path d="M1 6.500h11M6.500 6.500v5.500" /></svg></SwitchSlot>
              </SwitchHead>
              <HeadCell $pad={3}>モード</HeadCell>
              <HeadCell $pad={6}>T</HeadCell>
              <HeadCell $pad={1}>トラックマット<MiniBox $gap={26} $tone="#b4b4b4" /><MiniBox $outline /></HeadCell>
              <HeadCell $pad={8}>親とリンク</HeadCell>
            </HeadRow>
            {layers.map((l) => (
              <LayerRow key={l.no}>
                <LabelChip />
                <LayerNo>{l.no}</LayerNo>
                <LayerName><LayerStar size={13} fill="#a8a8a8" color="#a8a8a8" />{l.name}</LayerName>
                <SwitchGroup>
                  <SwitchSlot><ShyIcon /></SwitchSlot>
                  <SwitchSlot><SunIcon dim /></SwitchSlot>
                  <SwitchSlot><SlashBox /></SwitchSlot>
                  <MiniBox $gap={34} />
                  <MiniBox />
                  <MiniBox />
                </SwitchGroup>
                <SelectCell $pad={1}><MiniSelect $w={74}>通常<ChevronDown size={14} strokeWidth={3} /></MiniSelect></SelectCell>
                <SelectCell><MiniBox $gap={3} /></SelectCell>
                <SelectCell $pad={0}>
                  <Spiral />
                  <MiniSelect $w={73} $gap={4}>マットな<ChevronDown size={14} strokeWidth={3} /></MiniSelect>
                </SelectCell>
                <SelectCell $pad={7}>
                  <Spiral color="#666" />
                  <MiniSelect $w={97} $gap={7}>なし<ChevronDown size={14} strokeWidth={3} /></MiniSelect>
                </SelectCell>
              </LayerRow>
            ))}
          </LayerPane>
          <TrackPane>
            <NavArea />
            <NavBar><Handle $h={9} /></NavBar>
            <TimeRuler>
              {times.map((t, i) => (
                <TimeMark key={t} $first={i === 0}>{t}</TimeMark>
              ))}
            </TimeRuler>
            <AreaBar><AreaHandle $h={17} /></AreaBar>
            <GreenLine />
            {layers.map((l) => (
              <TrackRow key={l.no}><TrackBar /></TrackRow>
            ))}
            <PlayLine />
            <Playhead width="14" height="16" viewBox="0 0 14 16">
              <path d="M0 2a2 2 0 0 1 2-2h10a2 2 0 0 1 2 2v6l-7 8-7-8z" fill="#3d97dc" />
            </Playhead>
          </TrackPane>
        </TimelineBody>
        <StatusBar>
          フレームレンダリング時間 : <Elapsed>0ms</Elapsed>
          <StatusZoom>
            <svg width="10" height="6" viewBox="0 0 10 6" fill="#aaa"><path d="M5 0l5 6H0z" /></svg>
            <ZoomKnob />
            <ZoomTrack />
            <ZoomBig width="18" height="10" viewBox="0 0 18 10" fill="#aaa"><path d="M6 1l6 9H0zM12 0l6 10h-8z" /></ZoomBig>
          </StatusZoom>
        </StatusBar>
      </Timeline>
    </Shell>
  );
}
